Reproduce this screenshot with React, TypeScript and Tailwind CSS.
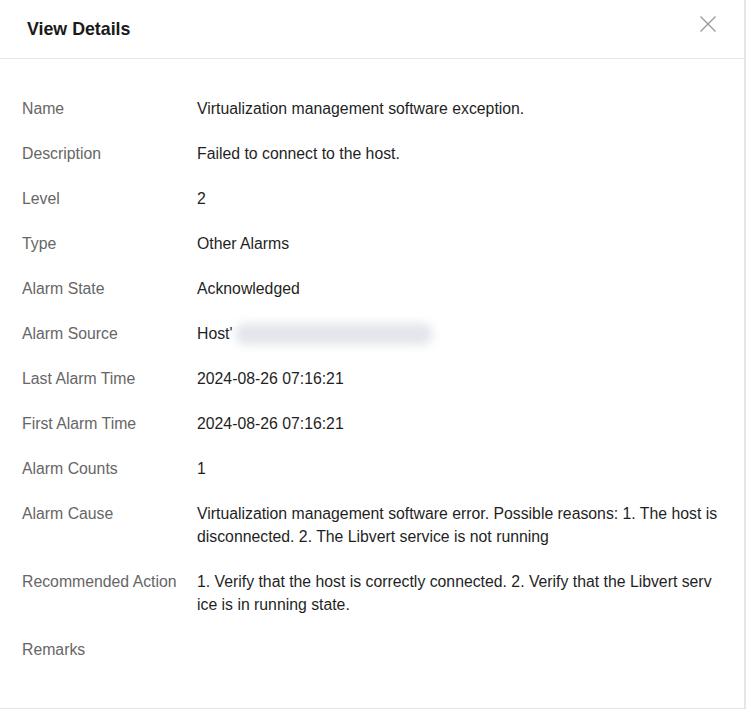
const rows: { label: string; lines: React.ReactNode[] }[] = [
  { label: 'Name', lines: ['Virtualization management software exception.'] },
  { label: 'Description', lines: ['Failed to connect to the host.'] },
  { label: 'Level', lines: ['2'] },
  { label: 'Type', lines: ['Other Alarms'] },
  { label: 'Alarm State', lines: ['Acknowledged'] },
  {
    label: 'Alarm Source',
    lines: [
      <span className="flex items-center">
        Host'
        <span className="ml-[2px] inline-block h-[22px] w-[198px] rounded-full bg-gray-300/60 blur-[5px]"></span>
      </span>,
    ],
  },
  { label: 'Last Alarm Time', lines: ['2024-08-26 07:16:21'] },
  { label: 'First Alarm Time', lines: ['2024-08-26 07:16:21'] },
  { label: 'Alarm Counts', lines: ['1'] },
  {
    label: 'Alarm Cause',
    lines: [
      'Virtualization management software error. Possible reasons: 1. The host is',
      'disconnected. 2. The Libvert service is not running',
    ],
  },
  {
    label: 'Recommended Action',
    lines: [
      '1. Verify that the host is correctly connected. 2. Verify that the Libvert serv',
      'ice is in running state.',
    ],
  },
  { label: 'Remarks', lines: [] },
];

export default function App() {
  return (
    <div className="w-[747px] h-[711px] bg-white font-['Liberation_Sans',Arial,sans-serif]">
      <div className="w-[746px] h-[709px] border-r-2 border-b border-[#e6e6e6] flex flex-col">
        {/* Header */}
        <div className="h-[59px] flex items-center justify-between pl-[27px] pr-[28px] border-b border-[#e8e8e8]">
          <h1 className="text-[17.8px] font-bold text-[#1a1a1a] pt-[1px]">View Details</h1>
          <svg width="16" height="16" viewBox="0 0 16 16" className="-mt-[11px]" fill="none" stroke="#9a9a9a" strokeWidth="1.4">
            <path d="M0.5 0.5 L15.5 15.5 M15.5 0.5 L0.5 15.5" />
          </svg>
        </div>

        {/* Body */}
        <div className="pt-[38px] pl-[22px] pr-[10px] flex flex-col gap-[22px] text-[15.8px] leading-[23px]">
          {rows.map((row) => (
            <div key={row.label} className="flex">
              <div className="w-[175px] shrink-0 text-[#666666]">{row.label}</div>
              <div className="flex-1 text-[#1f1f1f] whitespace-nowrap min-h-[23px]">
                {row.lines.map((line, i) => (
                  <div key={i}>{line}</div>
                ))}
              </div>
            </div>
          ))}
        </div>
      </div>
    </div>
  );
}
